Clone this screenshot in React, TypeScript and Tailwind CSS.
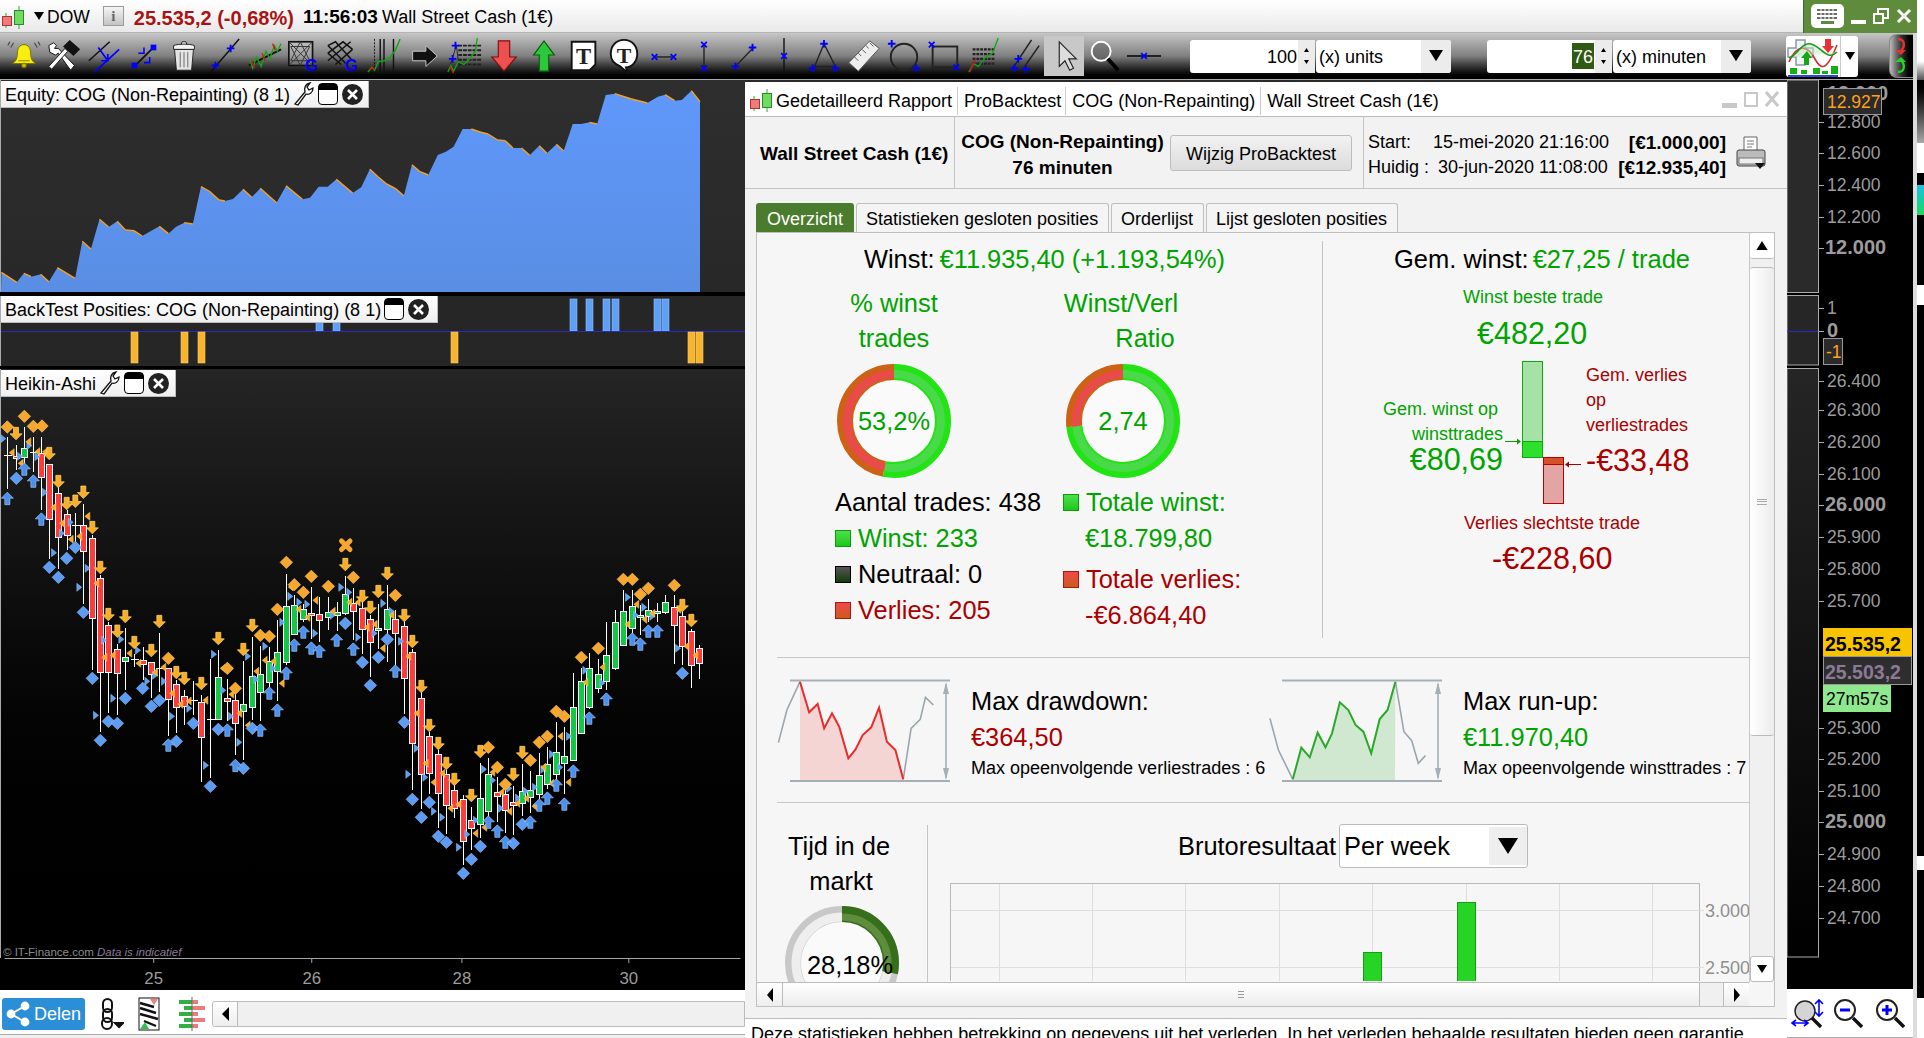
import type { ReactNode } from "react";

type Candle = [number, number, number, number, number, number];

// x, wick top, wick bottom, body top, body bottom, kind (0 red, 1 green, 2 doji). Values are 3x crop coords.
const left: Candle[] = [
  [22,105,262,162,167,2],[48,128,205,165,172,0],[73,75,190,140,168,1],[100,105,210,153,156,2],[124,105,325,155,228,0],
  [148,190,470,190,355,0],[175,245,500,275,408,0],[200,325,445,340,402,0],[226,333,420,372,375,2],[250,305,605,373,450,0],
  [277,400,803,412,652,0],[301,520,990,532,813,0],[325,660,932,673,813,0],[352,725,938,745,817,0],[376,678,863,769,781,1],
  [403,755,795,775,778,2],[428,735,833,778,790,0],[454,780,888,784,820,0],[478,693,870,800,803,2],[505,800,1002,802,895,0],
  [529,835,992,848,918,0],[553,865,968,884,915,0],[580,838,938,898,901,2],[604,880,1140,902,1009,0],[631,770,1128,954,957,2],
  [655,745,955,829,955,1],[682,830,957,892,901,0],[706,870,1060,898,967,0],[730,778,1073,908,930,1],[757,705,955,826,918,1],
  [781,732,957,818,874,1],[808,735,860,779,844,1],[832,655,897,754,811,1],[859,515,790,614,784,1],[883,580,700,613,700,1],
  [910,605,660,623,655,1],[934,555,710,637,642,0],[958,585,720,640,658,0],[985,585,683,634,649,1],[1010,600,686,634,642,1],
  [1036,522,638,578,636,1],[1060,558,713,607,631,0],[1087,600,755,620,685,0],[1111,640,825,653,724,0],[1135,605,740,681,688,1],
  [1162,550,780,623,685,1],[1186,625,790,653,696,0],
];
const right: Candle[] = [
  [13,330,635,376,532,0],[37,440,865,454,727,0],[64,570,920,590,820,0],[88,690,875,706,817,0],[115,745,978,760,877,0],
  [139,805,995,820,913,0],[163,850,947,868,922,0],[190,880,1088,895,1021,0],[214,915,1045,958,982,0],[241,783,1008,892,970,1],
  [265,768,950,818,931,1],[292,825,960,874,886,0],[316,860,992,880,928,0],[340,852,998,904,913,0],[367,786,942,871,907,1],
  [391,807,933,868,889,1],[418,752,890,823,880,1],[442,735,860,790,850,1],[469,660,860,754,820,1],[493,675,877,766,787,1],
  [520,513,778,619,778,1],[544,498,697,541,697,1],[568,453,620,502,619,1],[595,472,572,520,562,1],[619,360,563,463,541,1],
  [646,323,503,364,502,1],[670,263,433,331,433,1],[697,263,415,316,382,1],[721,308,398,343,349,1],[745,291,360,328,346,1],
  [772,303,360,331,337,1],[796,278,335,304,334,1],[823,280,485,319,373,0],[847,320,488,346,436,0],[874,380,557,391,493,0],
  [898,430,530,442,487,0],
];

type P = [number, number];
const toA = (l: P[]): P[] => l.map(([x, y]) => [x / 3, 400 + y / 3]);
const toB = (l: P[]): P[] => l.map(([x, y]) => [400 + x / 3, 500 + y / 3]);

const orangeDiamonds = [
  ...toA([[22,78],[73,46],[100,76],[126,75],[505,772],[682,802],[706,862],[781,703],[808,706],[832,625],[859,484],[883,551],[910,574],[934,526],[985,556],[1060,529],[1186,583]]),
  ...toB([[265,739],[292,799],[316,850],[391,778],[418,724],[442,706],[469,631],[493,646],[544,469],[595,442],[670,235],[697,235],[721,280],[745,262],[823,253]]),
];
const orangeDown = [
  ...toA([[48,97],[148,157],[175,241],[200,307],[226,300],[250,273],[277,379],[301,499],[325,640],[352,690],[376,646],[403,724],[454,748],[478,661],[529,814],[553,832],[604,847],[655,712],[730,745],[757,673],[1036,490],[1087,586],[1111,619],[1135,571],[1162,517]]),
  ...toB([[13,343],[37,421],[64,556],[88,673],[115,727],[139,787],[163,835],[214,883],[241,751],[340,820],[367,754],[847,313],[874,358]]),
];
const orangeLeft = [
  ...toA([[35,155],[62,187],[85,122],[112,152],[135,152],[160,319],[186,367],[212,415],[238,406],[262,346],[289,547],[313,769],[338,763],[388,757],[415,787],[465,814],[490,799],[516,877],[541,910],[566,900],[616,898],[668,802],[694,880],[718,937],[743,973],[769,811],[794,778],[820,781],[845,847],[872,558],[895,625],[922,649],[946,598],[998,631],[1048,604],[1073,604],[1100,679],[1124,670],[1148,742],[1175,643]]),
  ...toB([[50,637],[25,466],[77,787],[100,844],[127,817],[151,922],[175,910],[226,997],[253,979],[277,814],[304,874],[328,931],[352,907],[379,892],[403,916],[430,799],[454,847],[481,706],[505,844],[556,544],[607,499],[682,370],[709,310],[733,355],[757,337],[835,325],[859,436],[886,463]]),
];
const blueDiamonds = [
  ...toA([[49,232],[148,499],[175,529],[200,472],[226,439],[250,634],[277,832],[301,1018],[325,961],[352,967],[376,892],[428,862],[454,916],[478,898],[529,1021],[580,967],[631,1156],[655,985],[730,1102],[757,982],[1036,667],[1087,784],[1111,853],[1135,769],[1162,715]]),
  ...toB([[13,664],[37,895],[64,949],[88,904],[115,1006],[139,1024],[190,1117],[214,1075],[241,1036],[340,1027],[367,970],[847,517]]),
];
const blueUp = [
  ...toA([[22,293],[73,205],[100,241],[124,355],[505,1033],[682,988],[706,1094],[781,988],[808,877],[832,928],[859,817],[883,733],[910,694],[934,742],[958,751],[1010,718],[1060,745],[1186,811]]),
  ...toB([[265,964],[292,991],[316,1024],[391,964],[418,913],[442,892],[469,853],[493,910],[520,811],[568,652],[619,595],[697,415],[721,430],[745,391],[772,391]]),
];
const blueRight = [
  ...toA([[10,113],[60,166],[88,134],[112,167],[135,274],[162,455],[186,397],[212,364],[238,559],[263,502],[312,718],[364,715],[340,892],[288,943],[414,748],[442,841],[465,823],[492,841],[516,946],[568,922],[642,760],[618,1093],[670,868],[693,946],[718,1024],[744,766],[796,736],[769,835],[820,802],[847,664],[871,586],[898,604],[922,610],[946,697],[998,643],[1024,559],[1048,574],[1075,709],[1124,697],[1150,607],[1175,631]]),
  ...toB([[3,421],[50,742],[25,820],[76,829],[102,931],[127,949],[177,1039],[202,1000],[228,958],[252,805],[279,838],[303,922],[328,862],[354,891],[378,871],[405,859],[430,805],[456,760],[481,799],[507,706],[556,508],[607,546],[684,289],[708,343],[733,319],[757,346],[834,442]]),
];

const equity: P[] = [[3,577],[35,607],[50,580],[65,590],[85,583],[102,605],[120,563],[157,595],[172,484],[190,507],[208,418],[227,441],[245,424],[262,450],[280,452],[297,468],[333,439],[352,461],[368,440],[385,428],[403,432],[420,320],[437,333],[458,360],[470,363],[487,357],[508,328],[526,352],[544,325],[578,368],[598,317],[632,358],[648,353],[666,320],[685,320],[703,298],[737,339],[755,322],[773,268],[790,290],[808,312],[826,325],[844,347],[861,254],[878,275],[895,285],[915,225],[932,215],[948,200],[967,147],[985,147],[1003,156],[1020,162],[1040,180],[1056,182],[1072,204],[1090,204],[1107,226],[1127,197],[1143,220],[1163,193],[1178,213],[1197,132],[1215,132],[1232,127],[1248,132],[1266,45],[1285,41],[1320,57],[1353,69],[1375,50],[1390,44],[1410,62],[1425,60],[1445,32],[1463,65]];

const mini = (l: P[]) => l.map(([x, y]) => `${750 + x / 1.53},${650 + y / 3}`).join(" ");

const GREEN = "text-[#00a300]";
const RED = "text-[#aa0000]";
const BLUE = "#0000ff";

function CandleIcon() {
  return (
    <svg width="26" height="26" viewBox="0 0 26 26">
      <path d="M5 10v15M18 3v24" stroke="#3a3" strokeWidth="1" />
      <rect x="1.5" y="13.5" width="9" height="9" fill="#ef7b7b" stroke="#a33" />
      <rect x="13.5" y="7.5" width="9" height="14" fill="#6fdc5f" stroke="#2a8a2a" />
    </svg>
  );
}

function Plus({ x, y }: { x: number; y: number }) {
  return <path d={`M${x - 4} ${y}h8M${x} ${y - 4}v8`} stroke={BLUE} strokeWidth="2" fill="none" />;
}
function Cross({ x, y }: { x: number; y: number }) {
  return <path d={`M${x - 3} ${y - 3}l6 6M${x + 3} ${y - 3}l-6 6`} stroke={BLUE} strokeWidth="1.8" fill="none" />;
}

const toolbarIcons: ReactNode[] = [
  <g key="bell">
    <path d="M18 7c5 0 7 4 7 10 0 5 2 8 5 10H6c3-2 5-5 5-10 0-6 2-10 7-10z" fill="#f8ee10" stroke="#7a7000" />
    <path d="M12 24h12" stroke="#8a8000" />
    <circle cx="18" cy="29" r="2.5" fill="#c8b800" stroke="#7a7000" />
    <path d="M4 10l3-5M1 8l2-4M32 10l-3-5M35 8l-2-4" stroke="#444" strokeWidth="1.2" />
  </g>,
  <g key="tools">
    <path d="M2 8l5-3 3 3-2 3 4 0 17 18-4 5L12 16l-3 2-6-3z" fill="#fff" stroke="#111" />
    <path d="M5 33l-3-3 17-19 3 3z" fill="#fff" stroke="#111" />
    <path d="M17 9l7-7 11 10-7 7z" fill="#111" />
  </g>,
  <g key="par" fill="none">
    <path d="M2 24L24 4" stroke="#111" strokeWidth="1.6" />
    <path d="M8 36L34 12" stroke={BLUE} strokeWidth="1.8" />
    <path d="M12 10l10 14m0-7v7h-7" stroke={BLUE} strokeWidth="1.8" />
  </g>,
  <g key="dot">
    <path d="M9 29L27 11" stroke="#111" strokeWidth="1.8" />
    <path d="M12 16h6v-6M18 26h6v-6" stroke={BLUE} strokeWidth="1.6" fill="none" />
    <rect x="5" y="26" width="6" height="6" fill={BLUE} />
    <rect x="25" y="7" width="6" height="6" fill={BLUE} />
  </g>,
  <g key="trash">
    <path d="M8 12h20l-2 22H10z" fill="#e4e4e4" stroke="#222" />
    <path d="M7 8c5-2 17-2 22 0v4H7zM15 7l1-3h4l1 3" fill="#f4f4f4" stroke="#222" />
    <path d="M14 15v16M18 15v16M22 15v16" stroke="#666" />
  </g>,
  <g key="line">
    <path d="M4 36L34 1" stroke="#111" strokeWidth="1.6" />
    <Plus x={9} y={29} /><Plus x={25} y={11} />
  </g>,
  <g key="zig" fill="none">
    <path d="M2 29L36 12" stroke="#111" strokeWidth="2" />
    <path d="M3 22l3 10 4-12 5 10 5-16 4 8 5-14 3 6 4-8" stroke="#10a810" strokeWidth="1.4" />
    <path d="M5 24l3 8M16 16l3 8M27 6l3 7" stroke="#e01010" strokeWidth="1.4" />
  </g>,
  <g key="gann" fill="none">
    <rect x="2" y="4" width="25" height="25" stroke="#111" strokeWidth="1.8" fill="#fff" fillOpacity="0.25" />
    <path d="M2 4l25 25M27 4L2 29M14 4L4 24h20zM14 29L4 9h20z" stroke="#333" />
    <text x="19" y="35" fontSize="17" fontWeight="700" fill={BLUE}>G</text>
  </g>,
  <g key="grid" fill="none">
    <path d="M1 8l8-4 18 20M1 16l16-12 10 8M1 24l24-20M1 8l20 20M1 16l14 12M9 28L27 12" stroke="#111" strokeWidth="1.6" />
    <text x="19" y="35" fontSize="17" fontWeight="700" fill={BLUE}>G</text>
  </g>,
  <g key="vlines" fill="none">
    <path d="M8 1v36" stroke="#111" strokeDasharray="2 1.5" />
    <path d="M14 1v36M18 1v36M28 1v36" stroke="#111" strokeWidth="1.5" />
    <path d="M1 36l4-5 3 3 4-9 6-1 6-3 6-8 5-12" stroke="#10a810" strokeWidth="1.5" />
    <path d="M3 33l3-2 2 3" stroke="#e01010" strokeWidth="1.5" />
  </g>,
  <g key="arrow">
    <path d="M6 14h14V8l12 11-12 11v-6H6z" fill="#111" stroke="#ccc" />
  </g>,
  <g key="fib" fill="none">
    <path d="M12 8h24M12 13h24M12 18h24M12 23h24M12 28h24" stroke="#222" strokeWidth="2" strokeDasharray="4 1" />
    <path d="M2 33L10 8l3 24" stroke="#222" />
    <path d="M1 36l3-7 3 6 5-10 6 3 6-6 6-8 2-14" stroke="#10a810" strokeWidth="1.4" />
    <path d="M3 30l4 7" stroke="#e01010" strokeWidth="1.4" />
    <Plus x={9} y={8} /><Plus x={6} y={22} />
  </g>,
  <path key="down" d="M12 3h12v17h7L18 35 5 20h7z" fill="#ee5050" stroke="#7a1010" strokeWidth="1.2" />,
  <path key="up" d="M13 35h10V18h6L18 3 7 18h6z" fill="#2ac83a" stroke="#0a5a0a" strokeWidth="1.2" />,
  <g key="tbox">
    <path d="M5 4h25v24l-6 6H5z" fill="#fff" stroke="#111" strokeWidth="2" />
    <text x="17.5" y="27" fontSize="24" fontWeight="700" fontFamily="Liberation Serif" textAnchor="middle" fill="#222">T</text>
  </g>,
  <g key="tbub">
    <path d="M18 2c9 0 14 7 14 15s-6 14-12 14l2 6-8-7C9 28 4 24 4 17 4 9 9 2 18 2z" fill="#fff" stroke="#111" strokeWidth="2" />
    <text x="18" y="26" fontSize="23" fontWeight="700" fontFamily="Liberation Serif" textAnchor="middle" fill="#222">T</text>
  </g>,
  <g key="hh"><path d="M9 20h18" stroke="#222" strokeWidth="1.5" /><Cross x={8} y={20} /><Cross x={28} y={20} /></g>,
  <g key="vv"><path d="M18 8v24" stroke="#222" strokeWidth="1.5" /><Cross x={18} y={7} /><Cross x={18} y={32} /></g>,
  <g key="dg"><path d="M8 31L28 10" stroke="#222" strokeWidth="1.5" /><Plus x={27} y={10} /><Plus x={9} y={30} /></g>,
  <g key="vl"><path d="M18 0v37" stroke="#111" strokeWidth="1.5" /><Cross x={18} y={19} /></g>,
  <g key="tri" fill="none"><path d="M18 6L8 30h22z" stroke="#222" strokeWidth="1.5" /><Plus x={18} y={6} /><Plus x={6} y={32} /><Plus x={30} y={32} /></g>,
  <g key="ruler"><path d="M2 26L24 3l10 8-22 24z" fill="#eee" stroke="#555" /><path d="M8 20l4 4M12 16l3 3M16 12l4 4M20 8l3 3M24 5l4 4" stroke="#555" /></g>,
  <g key="circ" fill="none"><circle cx="18" cy="20" r="14" stroke="#222" strokeWidth="2" /><Plus x={5} y={6} /><Plus x={31} y={32} /></g>,
  <g key="rect" fill="none"><rect x="6" y="9" width="26" height="22" stroke="#222" strokeWidth="2" /><Cross x={5} y={7} /><Cross x={31} y={31} /></g>,
  <g key="fib2" fill="none">
    <path d="M6 12h24M6 17h24M6 22h24M6 27h24" stroke="#222" strokeWidth="2.4" strokeDasharray="3 1" />
    <path d="M2 36l5-9 5 3 8-10 7-4 6-16" stroke="#10a810" strokeWidth="1.4" />
    <path d="M3 36l6-14" stroke="#e01010" strokeWidth="1.4" />
  </g>,
  <g key="par2" fill="none">
    <path d="M6 32L26 2M16 34L34 8" stroke="#222" strokeWidth="1.6" />
    <Plus x={12} y={22} /><Plus x={8} y={32} /><Plus x={20} y={33} />
  </g>,
  <g key="cursor">
    <path d="M13 4v26l6-6 5 10 4-2-5-10h8z" fill="#ddd" stroke="#222" strokeWidth="1.2" />
  </g>,
  <g key="mag">
    <circle cx="15" cy="14" r="10" fill="#555" fillOpacity="0.5" stroke="#fff" strokeWidth="2" />
    <path d="M22 22l11 12" stroke="#000" strokeWidth="4" />
  </g>,
  <g key="hl"><path d="M0 19h36" stroke="#222" strokeWidth="2" /><Cross x={18} y={19} /></g>,
];

function Triangle({ up = false, size = 5, color = "#000" }: { up?: boolean; size?: number; color?: string }) {
  return (
    <svg width={size * 2} height={size * 1.6} viewBox="0 0 10 8">
      <path d={up ? "M0 8h10L5 0z" : "M0 0h10L5 8z"} fill={color} />
    </svg>
  );
}

function TitleBar() {
  return (
    <div className="h-[33px] flex items-center bg-gradient-to-b from-white to-[#e9e9e9] border-b border-[#b4b4b4] text-[18px] text-black">
      <div className="w-[30px] pl-[1px]"><CandleIcon /></div>
      <div className="w-[17px] flex justify-center"><Triangle /></div>
      <span className="pt-[3px] text-[17.5px]">DOW</span>
      <div className="ml-[13px] w-[21px] h-[20px] bg-gradient-to-b from-[#f5f5f5] to-[#c4c4c4] border border-[#9a9a9a] flex items-center justify-center font-['Liberation_Serif',serif] font-bold text-[#666] text-[15px]">i</div>
      <span className="ml-[10px] pt-[3px] font-bold text-[#a81414] text-[20px]">25.535,2 (-0,68%)</span>
      <span className="ml-[9px] pt-[3px] font-bold text-[19px]">11:56:03</span>
      <span className="ml-[4px] pt-[3px]">Wall Street Cash (1€)</span>
      <div className="ml-auto w-[114px] h-[33px] bg-[#5e8c3c] border-l border-[#3f6a26] flex items-center pl-[7px]">
        <svg width="33" height="24" viewBox="0 0 33 24">
          <rect width="33" height="24" rx="5" fill="#fff" />
          <path d="M6 5h20v2H6zM6 9h20v2H6zM6 13h20v2H6z" fill="#6a6a6a" />
          <path d="M10 5v10M14 5v10M18 5v10M22 5v10" stroke="#fff" />
          <rect x="10" y="17" width="13" height="3" fill="#5e8c3c" />
        </svg>
        <div className="ml-[7px] mt-[12px] w-[15px] h-[4px] bg-white" />
        <svg className="ml-[7px]" width="16" height="16" viewBox="0 0 16 16" fill="none" stroke="#fff" strokeWidth="2">
          <rect x="1" y="6" width="9" height="9" />
          <path d="M5 5V1h10v9h-4" />
        </svg>
        <svg className="ml-[7px]" width="16" height="16" viewBox="0 0 16 16" stroke="#fff" strokeWidth="3">
          <path d="M2 2l12 12M14 2L2 14" />
        </svg>
      </div>
      <div className="w-[7px] h-[33px] bg-white" />
    </div>
  );
}

function SpinInput({ value, selected = false }: { value: string; selected?: boolean }) {
  return (
    <div className="w-[125px] h-[33px] bg-white rounded-[3px] flex items-center justify-end text-[18px] text-black">
      {selected ? <span className="bg-[#2e5a12] text-white px-[1px] h-[26px] leading-[28px]">{value}</span> : <span className="pt-[2px]">{value}</span>}
      <div className="ml-[1px] w-[17px] h-[33px] bg-[#ececec] flex flex-col items-center justify-center gap-[8px]">
        <Triangle up size={2.5} />
        <Triangle size={2.5} />
      </div>
    </div>
  );
}

function UnitSelect({ label, width }: { label: string; width: string }) {
  return (
    <div className={`${width} ml-[1px] h-[33px] bg-white rounded-[3px] flex items-center text-[18px] text-black pl-[3px]`}>
      <span className="pt-[2px]">{label}</span>
      <div className="ml-auto w-[30px] h-[33px] bg-[#ececec] flex items-center justify-center rounded-r-[3px]">
        <Triangle size={7} />
      </div>
    </div>
  );
}

function Toolbar() {
  return (
    <div className="h-[47px] flex items-center bg-gradient-to-b from-[#c6c6c6] via-[#808080] to-black border-b border-[#aaa]">
      <div className="pl-[4px] flex">
        {toolbarIcons.map((icon, i) => (
          <div key={i} className={`w-[40px] h-[40px] flex items-center justify-center ${i === 26 ? "bg-[#c8c8c8]" : ""}`}>
            <svg width="36" height="36" viewBox="0 0 36 38" className="overflow-visible">{icon}</svg>
          </div>
        ))}
      </div>
      <div className="ml-[26px] flex"><SpinInput value="100" /><UnitSelect label="(x) units" width="w-[135px]" /></div>
      <div className="ml-[36px] flex"><SpinInput value="76" selected /><UnitSelect label="(x) minuten" width="w-[138px]" /></div>
      <div className="ml-[35px] w-[72px] h-[41px] bg-white rounded-[3px] flex items-center">
        <svg width="54" height="41" viewBox="0 0 54 41">
          <path d="M10 4h9v8h8v9h-8v8h-9v-8H2v-9h8z" fill="#f0f4f8" stroke="#8a9aa8" strokeWidth="1.5" />
          <path d="M3 26c8-18 18-18 26-3s14 6 22-14" stroke="#d03030" strokeWidth="1.6" fill="none" />
          <path d="M3 22c8-2 12-16 22-14s16 18 26 8" stroke="#1a9a1a" strokeWidth="1.6" fill="#bfeabf" fillOpacity="0.5" />
          <path d="M39 3h6v7h3l-6 7-6-7h3z" fill="#e83030" />
          <path d="M18 29h5v-7h3l-5-7-6 7h3z" fill="#14a814" />
          <path d="M4 32h7v6H4zM27 32h7v6h-7zM45 30h7v8h-7zM15 34h6v4h-6zM36 35h6v3h-6z" fill="#14b014" />
          <path d="M2 40h50" stroke="#2a4ad8" strokeWidth="2" />
        </svg>
        <div className="h-[41px] w-[18px] border-l border-[#ccc] flex items-center justify-center"><Triangle size={5} /></div>
      </div>
      <div className="ml-[31px] w-[25px] h-[44px] bg-gradient-to-r from-[#bbb] via-[#333] to-black rounded-l-[8px] border border-[#888] border-r-0 flex items-center justify-center">
        <svg width="18" height="40" viewBox="0 0 18 40" fill="none">
          <path d="M5 3c6 0 8 6 3 12" stroke="#e83030" strokeWidth="2.4" />
          <path d="M2 14h11l-5 5z" fill="#e83030" />
          <path d="M5 36c6 0 8-6 3-12" stroke="#22d822" strokeWidth="2.4" />
          <path d="M2 26h11l-5-5z" fill="#22d822" />
        </svg>
      </div>
      <div className="w-[4px] h-[47px] bg-[#d8d8d8]" />
      <div className="w-[7px] h-[47px] bg-gradient-to-b from-white from-60% to-[#555]" />
    </div>
  );
}

function ChartLabel({ text, width, wrench = false }: { text: string; width: string; wrench?: boolean }) {
  return (
    <div className={`${width} h-[27px] flex items-center pl-[4px] bg-gradient-to-b from-white to-[#efefef] border-b border-r border-[#bbb] text-[18px] text-black shrink-0`}>
      <span className="pt-[2px] whitespace-nowrap">{text}</span>
      {wrench && (
        <svg className="ml-[3px]" width="22" height="24" viewBox="0 0 22 24" fill="#fff" stroke="#111" strokeWidth="1.3">
          <path d="M2 22l10-12c-1-4 0-8 5-9l-3 4 2 3 4-2c0 5-4 7-7 6L5 23z" />
        </svg>
      )}
      <div className="ml-[3px] w-[20px] h-[22px] rounded-[4px] border border-black bg-gradient-to-b from-black from-30% to-white to-30%" />
      <div className="ml-[4px] w-[21px] h-[21px] rounded-full bg-[#222] flex items-center justify-center">
        <svg width="11" height="11" viewBox="0 0 11 11" stroke="#fff" strokeWidth="2.6"><path d="M1 1l9 9M10 1l-9 9" /></svg>
      </div>
    </div>
  );
}

function EquityPanel() {
  const pts = equity.map(([x, y]) => [x / 2.09, y / 3]);
  const fill = `${pts.map(([x, y]) => `${x},${y}`).join(" ")} ${pts[pts.length - 1][0]},212 1,212`;
  return (
    <div className="h-[212px] relative bg-gradient-to-b from-[#2e2e2e] to-[#282828] border-l border-[#aaa]">
      <svg className="block" width="744" height="212" viewBox="1 0 744 212">
        <defs>
          <linearGradient id="eq" x1="0" x2="0" y1="0" y2="1">
            <stop offset="0" stopColor="#5f98fb" />
            <stop offset="1" stopColor="#5a8ee4" />
          </linearGradient>
        </defs>
        <polygon points={fill} fill="url(#eq)" />
        {pts.slice(1).map(([x, y], i) =>
          y > pts[i][1] ? (
            <line key={i} x1={pts[i][0]} y1={pts[i][1]} x2={x} y2={y} stroke="#f5a024" strokeWidth="1.4" />
          ) : null
        )}
      </svg>
      <div className="absolute left-0 top-[1px]">
        <ChartLabel text="Equity: COG (Non-Repainting) (8 1)" width="w-[368px]" wrench />
      </div>
    </div>
  );
}

function BackTestPanel() {
  const up = [316, 333, 570, 586, 603, 612, 654, 662];
  const down = [131, 181, 198, 451, 688, 696];
  return (
    <div className="h-[70px] mt-[4px] relative bg-[#262626] border-l border-[#aaa]">
      <svg className="block" width="744" height="70" viewBox="1 296 744 70">
        {up.map((x) => (
          <rect key={x} x={x} y="299" width="7" height="32" fill="#5da0f5" stroke="#8fc0fa" strokeWidth="0.6" />
        ))}
        <line x1="0" x2="745" y1="331.5" y2="331.5" stroke="#2a2ac8" />
        {down.map((x) => (
          <rect key={x} x={x} y="332" width="7" height="31" fill="#f8b42c" stroke="#fdd070" strokeWidth="0.6" />
        ))}
      </svg>
      <div className="absolute left-0 top-0">
        <ChartLabel text="BackTest Posities: COG (Non-Repainting) (8 1)" width="w-[437px]" />
      </div>
    </div>
  );
}

function diamond([x, y]: P, r = 6.2) {
  return `M${x} ${y - r}L${x + r} ${y}L${x} ${y + r}L${x - r} ${y}Z`;
}
function arrow([x, y]: P, d: 1 | -1) {
  return `M${x - 2.5} ${y - 6 * d}h5v${6.5 * d}h3.5L${x} ${y + 6.5 * d}L${x - 6} ${y + 0.5 * d}h3.5z`;
}
function tri([x, y]: P, dir: 1 | -1) {
  return `M${x - 2.5 * dir} ${y - 4}L${x + 2.5 * dir} ${y}L${x - 2.5 * dir} ${y + 4}Z`;
}

function CandleMark({ c, off, base }: { c: Candle; off: number; base: number }) {
  const [x0, wt, wb, bt, bb, kind] = c;
  const x = Math.round(off + x0 / 3) + 0.5;
  const y = (v: number) => Math.round(base + v / 3) + 0.5;
  return (
    <g shapeRendering="crispEdges">
      <line x1={x} x2={x} y1={y(wt)} y2={y(wb)} stroke="#fff" />
      {kind === 2 ? (
        <line x1={x - 4} x2={x + 4} y1={y(bt)} y2={y(bt)} stroke="#fff" strokeWidth="1.4" />
      ) : (
        <rect x={x - 3} y={y(bt)} width="6" height={Math.max(y(bb) - y(bt), 2)} fill={kind === 0 ? "#ff3c3c" : "#12c844"} stroke="#fff" />
      )}
    </g>
  );
}

function HeikinPanel() {
  return (
    <div className="h-[589px] mt-[3px] relative bg-gradient-to-b from-[#252525] to-black border-l border-[#aaa]">
      <svg className="block" width="744" height="589" viewBox="1 368 744 589">
        {left.map((c, i) => <CandleMark key={i} c={c} off={0} base={400} />)}
        {right.map((c, i) => <CandleMark key={i} c={c} off={400} base={500} />)}
        {blueRight.map((p, i) => <path key={i} d={tri(p, 1)} fill="#5aa0f5" stroke="#9cc6f8" strokeWidth="0.5" />)}
        {orangeLeft.map((p, i) => <path key={i} d={tri(p, -1)} fill="#f8aa28" stroke="#ffd070" strokeWidth="0.5" />)}
        {orangeDiamonds.map((p, i) => <path key={i} d={diamond(p)} fill="#f7a62e" stroke="#ffc860" strokeWidth="0.7" />)}
        {blueDiamonds.map((p, i) => <path key={i} d={diamond(p)} fill="#5c9cf5" stroke="#8dbdf9" strokeWidth="0.7" />)}
        {orangeDown.map((p, i) => <path key={i} d={arrow(p, 1)} fill="#f9ae26" stroke="#ffd878" strokeWidth="0.7" />)}
        {blueUp.map((p, i) => <path key={i} d={arrow(p, -1)} fill="#4c90ee" stroke="#9cc6f8" strokeWidth="0.7" />)}
        <path d="M341.5 540L350 548.5M350 540L341.5 548.5" stroke="#f7a62e" strokeWidth="5" strokeLinecap="round" />
        <text x="3" y="955" fontSize="11.5" fill="#8a8a8a">© IT-Finance.com</text>
        <text x="97" y="955" fontSize="11.5" fontStyle="italic" fill="#8a7a96">Data is indicatief</text>
      </svg>
      <div className="absolute left-0 top-[1px]">
        <ChartLabel text="Heikin-Ashi" width="w-[175px]" wrench />
      </div>
    </div>
  );
}

function TimeAxis() {
  const ticks: [number, string][] = [[151, "25"], [311, "26"], [463, "28"], [632, "30"]];
  return (
    <svg className="block bg-black" width="745" height="32" viewBox="0 957 745 32">
      <line x1="0" x2="745" y1="957.5" y2="957.5" stroke="#aaa" />
      {ticks.map(([x, t]) => (
        <g key={t}>
          <line x1={x} x2={x} y1="958" y2="962" stroke="#aaa" />
          <text x={x} y="983" fontSize="17" fill="#9c9c9c" textAnchor="middle">{t}</text>
        </g>
      ))}
    </svg>
  );
}

function BottomBar() {
  return (
    <div className="h-[49px] bg-[#f0f0f0] flex flex-col">
      <div className="h-[45px] bg-white flex items-center pl-[2px] pt-[4px] border-b border-[#aaa]">
        <div className="w-[83px] h-[32px] bg-[#2b8fd8] rounded-[3px] flex items-center pl-[4px] gap-[4px] text-white text-[18px]">
          <svg width="24" height="26" viewBox="0 0 24 26" fill="#fff" stroke="#fff" strokeWidth="2">
            <path d="M19 5L5 13l14 8" fill="none" />
            <circle cx="19" cy="5" r="3.4" /><circle cx="5" cy="13" r="3.4" /><circle cx="19" cy="21" r="3.4" />
          </svg>
          <span className="pt-[2px]">Delen</span>
        </div>
        <svg className="ml-[13px]" width="26" height="32" viewBox="0 0 26 32" fill="none" stroke="#111" strokeWidth="2">
          <rect x="5" y="1" width="9" height="13" rx="4.5" />
          <rect x="5" y="11" width="9" height="13" rx="4.5" />
          <rect x="4" y="20" width="10" height="11" rx="5" />
          <path d="M17 25h8l-4 4z" fill="#111" />
        </svg>
        <svg className="ml-[14px]" width="22" height="34" viewBox="0 0 22 34">
          <rect x="1" y="1" width="20" height="32" fill="#fff" stroke="#111" />
          <path d="M2 6l14 4M2 11l16 5M2 17l18 5M6 24l12 5" stroke="#111" strokeWidth="2.4" />
          <path d="M12 2h8l-4 6z" fill="#ee8080" />
          <path d="M2 32h9l-4-7z" fill="#30c050" />
        </svg>
        <svg className="ml-[18px]" width="27" height="34" viewBox="0 0 27 34">
          <path d="M1 3h13v4H1zM1 15h13v4H1zM1 27h13v4H1zM6 9h8v4H6zM6 21h8v4H6z" fill="#30b040" />
          <path d="M14 3h6v4h-6zM14 9h13v4H14zM14 15h6v4h-6zM14 21h13v4H14zM14 27h6v4h-6z" fill="#ee7a7a" />
          <path d="M14 0v34" stroke="#666" />
        </svg>
        <div className="ml-[7px] flex-1 h-[26px] bg-[#f0f0f0] border border-[#bbb] rounded-l-[3px] flex">
          <div className="w-[25px] bg-gradient-to-b from-white to-[#eee] border-r border-[#bbb] rounded-l-[3px] flex items-center justify-center">
            <svg width="7" height="14" viewBox="0 0 7 14"><path d="M7 0v14L0 7z" fill="#000" /></svg>
          </div>
        </div>
      </div>
    </div>
  );
}

function Ring({ pct, label, red = "#e94a4a" }: { pct: number; label: string; red?: string }) {
  const rest = 100 - pct;
  return (
    <svg className="overflow-visible" width="114" height="114" viewBox="0 0 114 114">
      <circle cx="57" cy="57" r="42" fill="#fafafa" />
      <g fill="none" transform="rotate(-90 57 57)">
        <circle cx="57" cy="57" r="49" strokeWidth="16" pathLength="100" stroke="#22e414" strokeDasharray={`${pct} 100`} />
        <circle cx="57" cy="57" r="47" strokeWidth="8" pathLength="100" stroke="#49da49" strokeDasharray={`${pct} 100`} />
        <circle cx="57" cy="57" r="49" strokeWidth="16" pathLength="100" stroke="#ce6214" strokeDasharray={`${rest} 100`} strokeDashoffset={-pct} />
        <circle cx="57" cy="57" r="47" strokeWidth="8" pathLength="100" stroke={red} strokeDasharray={`${rest} 100`} strokeDashoffset={-pct} />
      </g>
      <text x="57" y="66" textAnchor="middle" fontSize="25.4" fill="#00a300">{label}</text>
    </svg>
  );
}

function Swatch({ kind }: { kind: "g" | "r" | "n" }) {
  const cls = {
    g: "from-[#4be04b] to-[#18c818] border-[#0e9a0e]",
    r: "from-[#f04848] to-[#cc5a14] border-[#a81818]",
    n: "from-[#555] to-[#143a06] border-black",
  }[kind];
  return <div className={`w-[16px] h-[17px] border bg-gradient-to-b ${cls} shrink-0`} />;
}

function Row({ color, children, swatch, pad = false }: { color?: string; children: ReactNode; swatch?: "g" | "r" | "n"; pad?: boolean }) {
  return (
    <div className={`h-[36px] flex items-center gap-[7px] whitespace-nowrap ${color ?? "text-black"} ${pad ? "pl-[22px]" : ""}`}>
      {swatch && <Swatch kind={swatch} />}
      <span>{children}</span>
    </div>
  );
}

function OverviewLeft() {
  return (
    <div className="w-[566px] h-[397px] mt-[8px] border-r border-[#c4c4c4] text-[25.4px] leading-[35px]">
      <div className="h-[36px] pl-[107px] flex items-center gap-[5px] whitespace-nowrap">
        <span className="text-black">Winst:</span>
        <span className={GREEN}>€11.935,40 (+1.193,54%)</span>
      </div>
      <div className={`mt-[9px] flex ${GREEN}`}>
        <div className="ml-[22px] w-[230px] flex flex-col items-center">
          <span>% winst</span>
          <span>trades</span>
          <div className="mt-[8px]"><Ring pct={53.2} label="53,2%" /></div>
        </div>
        <div className="w-[228px] flex flex-col items-center">
          <span className="-ml-[4px]">Winst/Verl</span>
          <span className="ml-[44px]">Ratio</span>
          <div className="mt-[8px]"><Ring pct={73.2} label="2,74" /></div>
        </div>
      </div>
      <div className="mt-[6px] pl-[78px] flex">
        <div className="w-[228px]">
          <Row>Aantal trades: 438</Row>
          <Row color={GREEN} swatch="g">Winst: 233</Row>
          <Row swatch="n">Neutraal: 0</Row>
          <Row color={RED} swatch="r">Verlies: 205</Row>
        </div>
        <div>
          <Row color={GREEN} swatch="g">Totale winst:</Row>
          <Row color={GREEN} pad>€18.799,80</Row>
          <div className="h-[5px]" />
          <Row color={RED} swatch="r">Totale verlies:</Row>
          <Row color={RED} pad>-€6.864,40</Row>
        </div>
      </div>
    </div>
  );
}

function OverviewRight() {
  return (
    <div className="flex-1 pt-[8px] text-[18px]">
      <div className="h-[36px] pl-[71px] flex items-center gap-[4px] text-[25.5px] whitespace-nowrap">
        <span className="text-black">Gem. winst:</span>
        <span className={GREEN}>€27,25 / trade</span>
      </div>
      <div className={`mt-[7px] h-[26px] pl-[140px] flex items-center leading-none ${GREEN}`}>Winst beste trade</div>
      <div className={`mt-[6px] h-[36px] pl-[154px] flex items-center text-[30.5px] ${GREEN}`}>€482,20</div>
      <div className="mt-[6px] flex h-[146px]">
        <div className={`w-[180px] flex flex-col items-end ${GREEN}`}>
          <div className="mt-[39px] leading-[24px] mr-[5px] whitespace-nowrap">Gem. winst op</div>
          <div className="leading-[26px]">winsttrades</div>
          <div className="text-[30.5px] leading-[36px] -mt-[6px]">€80,69</div>
        </div>
        <svg className="block shrink-0" width="82" height="146" viewBox="1504 357 82 146">
          <rect x="1523.5" y="360.5" width="20" height="96" fill="#a6e2a6" stroke="#10a810" />
          <rect x="1523.5" y="440.5" width="20" height="16" fill="#2ee02e" stroke="#10a810" />
          <rect x="1544.5" y="456.5" width="20" height="46" fill="#e3a4a4" stroke="#b80000" />
          <rect x="1544.5" y="456.5" width="20" height="7" fill="#d8502a" stroke="#b80000" />
          <path d="M1506 440.5h15" stroke="#0a9a0a" /><path d="M1522 440.5l-4-3v6z" fill="#0a9a0a" />
          <path d="M1582 463.5h-15" stroke="#a80000" /><path d="M1566 463.5l4-3v6z" fill="#a80000" />
        </svg>
        <div className={`flex flex-col pl-[1px] ${RED}`}>
          <div className="mt-[4px] leading-[26px] whitespace-nowrap">Gem. verlies</div>
          <div className="leading-[25px]">op</div>
          <div className="leading-[25px]">verliestrades</div>
          <div className="text-[30.5px] leading-[36px] mt-[4px]">-€33,48</div>
        </div>
      </div>
      <div className={`mt-[6px] h-[26px] pl-[141px] flex items-center leading-none ${RED}`}>Verlies slechtste trade</div>
      <div className={`mt-[5px] h-[36px] pl-[169px] flex items-center text-[30.5px] ${RED}`}>-€228,60</div>
    </div>
  );
}

function MiniChart({ box, width, before, main, after, fill, stroke, areaX, arrowX, lineX }: {
  box: string; width: number; before: string; main: string; after: string; fill: string; stroke: string; areaX: [number, number]; arrowX: number; lineX: number;
}) {
  const [x0, x1] = areaX;
  return (
    <svg className="block shrink-0" width={width} height="110" viewBox={box}>
      <polygon points={`${main} ${x1},781 ${x0},781`} fill={fill} />
      <polyline points={before} fill="none" stroke="#9aa6ac" strokeWidth="1.6" />
      <polyline points={after} fill="none" stroke="#9aa6ac" strokeWidth="1.6" />
      <polyline points={main} fill="none" stroke={stroke} strokeWidth="2" />
      <path d={`M${lineX} 680.5h160M${lineX} 781h160`} stroke="#a4b0b6" strokeWidth="2" />
      <path d={`M${arrowX} 684v94`} stroke="#a4b0b6" strokeWidth="1.6" />
      <path d={`M${arrowX} 682l-3 12h6zM${arrowX} 780l-3-12h6z`} fill="#a4b0b6" />
    </svg>
  );
}

function DrawdownRow() {
  return (
    <div className="h-[144px] flex pl-[17px]">
      <div className="pt-[17px]">
        <MiniChart
          box="775 675 190 110" width={190} lineX={791}
          before={mini([[45,278],[58,180],[78,95]])}
          main={mini([[78,95],[92,187],[105,162],[115,235],[127,190],[138,230],[152,325],[163,298],[174,255],[187,232],[199,173],[211,275],[224,300],[236,388]])}
          after={mini([[236,388],[248,235],[262,208],[270,142],[282,165]])}
          fill="#f5d4d4" stroke="#e82c2c" areaX={[801, 904]} arrowX={947}
        />
      </div>
      <div className="ml-[7px] w-[296px] pt-[25px]">
        <div className="text-[25.4px] leading-[36px] text-black">Max drawdown:</div>
        <div className={`text-[25.4px] leading-[36px] ${RED}`}>€364,50</div>
        <div className="text-[18px] leading-[26px] text-black whitespace-nowrap">Max opeenvolgende verliestrades : 6</div>
      </div>
      <div className="pt-[17px]">
        <MiniChart
          box="1268 675 192 110" width={192} lineX={1283}
          before={mini([[797,205],[810,300],[832,388]])}
          main={mini([[832,388],[845,293],[858,322],[870,248],[882,292],[892,250],[904,157],[917,180],[928,225],[940,245],[952,310],[965,207],[977,180],[989,95]])}
          after={mini([[989,95],[1002,245],[1014,272],[1024,340],[1035,317]])}
          fill="#cfe8cf" stroke="#2aa82a" areaX={[1294, 1396]} arrowX={1439}
        />
      </div>
      <div className="ml-[4px] pt-[25px]">
        <div className="text-[25.4px] leading-[36px] text-black">Max run-up:</div>
        <div className={`text-[25.4px] leading-[36px] ${GREEN}`}>€11.970,40</div>
        <div className="text-[18px] leading-[26px] text-black whitespace-nowrap">Max opeenvolgende winsttrades : 7</div>
      </div>
    </div>
  );
}

function MarketRow() {
  return (
    <div className="h-[179px] flex overflow-hidden">
      <div className="w-[171px] mt-[22px] border-r border-[#c4c4c4] flex flex-col items-center text-[25.4px] leading-[35px] text-black shrink-0">
        <span className="mt-[4px] -ml-[6px]">Tijd in de</span>
        <span className="-ml-[2px]">markt</span>
        <svg className="mt-[7px] overflow-visible shrink-0" width="114" height="114" viewBox="0 0 114 114">
          <circle cx="57" cy="57" r="42" fill="#fafafa" />
          <circle cx="57" cy="57" r="49" fill="none" strokeWidth="16" stroke="#c8c8c8" />
          <circle cx="57" cy="57" r="46" fill="none" strokeWidth="9" stroke="#eeeeee" />
          <g transform="rotate(-90 57 57)" fill="none">
            <circle cx="57" cy="57" r="49" strokeWidth="16" pathLength="100" stroke="#356f1c" strokeDasharray="28.18 100" />
            <circle cx="57" cy="57" r="46" strokeWidth="7" pathLength="100" stroke="#5e8d3e" strokeDasharray="28.18 100" />
          </g>
          <text x="65" y="68" textAnchor="middle" fontSize="25.4" fill="#000">28,18%</text>
        </svg>
      </div>
      <div className="flex-1 min-w-0 pt-[21px]">
        <div className="flex items-center h-[44px] pl-[250px] text-[25.4px] text-black">
          <span>Brutoresultaat</span>
          <div className="ml-[3px] w-[189px] h-[44px] bg-white border border-[#bbb] rounded-[3px] flex items-center pl-[4px]">
            <span>Per week</span>
            <div className="ml-auto w-[38px] h-[38px] bg-[#eee] flex items-center justify-center"><Triangle size={10} /></div>
          </div>
        </div>
        <svg className="block mt-[15px]" width="821" height="98" viewBox="929 883 821 98">
          <rect x="951.5" y="883.5" width="749" height="110" fill="none" stroke="#b8b8b8" />
          {[1000, 1093, 1186, 1280, 1373, 1467, 1560, 1653].map((x) => (
            <line key={x} x1={x + 0.5} x2={x + 0.5} y1="884" y2="981" stroke="#dedede" />
          ))}
          {[910, 967].map((y) => <line key={y} x1="952" x2="1705" y1={y + 0.5} y2={y + 0.5} stroke="#dedede" />)}
          <rect x="1364.5" y="952.5" width="18" height="40" fill="#26d426" stroke="#12a012" />
          <rect x="1458.5" y="902.5" width="18" height="90" fill="#26d426" stroke="#12a012" />
          <text x="1706" y="917" fontSize="18" fill="#8f8f8f">3.000</text>
          <text x="1706" y="974" fontSize="18" fill="#8f8f8f">2.500</text>
        </svg>
      </div>
    </div>
  );
}

function VScroll() {
  return (
    <div className="w-[25px] flex flex-col bg-[#f0f0f0] border-l border-[#c8c8c8]">
      <div className="h-[26px] bg-white border-b border-[#bbb] rounded-[3px] flex items-center justify-center"><Triangle up size={6} /></div>
      <div className="h-[8px]" />
      <div className="h-[469px] bg-gradient-to-r from-white to-[#ececec] border-y border-[#bbb] rounded-[3px] flex items-center justify-center">
        <div className="w-[10px] h-[6px] border-y border-[#aaa] flex items-center"><div className="w-full h-px bg-[#aaa]" /></div>
      </div>
      <div className="mt-auto h-[26px] bg-white border border-[#bbb] rounded-[3px] flex items-center justify-center"><Triangle size={5} /></div>
    </div>
  );
}

function HScroll() {
  return (
    <div className="h-[25px] w-[992px] flex bg-[#f0f0f0] border-t border-[#bbb]">
      <div className="w-[26px] bg-gradient-to-b from-white to-[#eee] border-r border-[#bbb] rounded-l-[3px] flex items-center justify-center">
        <svg width="6" height="14" viewBox="0 0 6 14"><path d="M6 0v14L0 7z" fill="#000" /></svg>
      </div>
      <div className="w-[917px] bg-gradient-to-b from-white to-[#ececec] border-r border-[#bbb] flex items-center justify-center">
        <div className="w-[6px] h-[7px] border-y border-[#999] flex items-center"><div className="w-full h-px bg-[#999]" /></div>
      </div>
      <div className="ml-auto w-[26px] bg-gradient-to-b from-white to-[#eee] border-l border-[#bbb] rounded-r-[3px] flex items-center justify-center">
        <svg width="6" height="14" viewBox="0 0 6 14"><path d="M0 0v14L6 7z" fill="#000" /></svg>
      </div>
    </div>
  );
}

function Report() {
  const tab = "h-[29px] px-[9px] pt-[3px] flex items-center bg-[#f4f4f4] border border-b-0 border-[#c0c0c0] rounded-t-[3px] text-black";
  return (
    <div className="h-[956px] bg-[#f2f2f2] text-[18px] text-black flex flex-col overflow-hidden">
      <div className="h-[35px] shrink-0 flex items-center pl-[4px] bg-white border-b border-[#bbb] whitespace-nowrap">
        <CandleIcon />
        <span className="ml-[1px] pt-[5px]">Gedetailleerd Rapport</span>
        <span className="ml-[5px] mt-[4px] pl-[6px] pt-[1px] border-l border-[#ccc]">ProBacktest</span>
        <span className="ml-[4px] mt-[4px] pl-[6px] pt-[1px] border-l border-[#ccc]">COG (Non-Repainting)</span>
        <span className="ml-[5px] mt-[4px] pl-[6px] pt-[1px] border-l border-[#ccc]">Wall Street Cash (1€)</span>
        <div className="ml-auto mr-[8px] flex items-center gap-[7px]">
          <div className="w-[15px] h-[5px] mt-[12px] bg-[#c8c8c8]" />
          <div className="w-[14px] h-[15px] border-[2px] border-[#c8c8c8]" />
          <svg width="14" height="16" viewBox="0 0 14 16" stroke="#c8c8c8" strokeWidth="3"><path d="M1 1l12 14M13 1L1 15" /></svg>
        </div>
      </div>
      <div className="h-[72px] shrink-0 flex items-center border-b border-[#c4c4c4]">
        <div className="w-[210px] h-full flex items-center pl-[15px] pt-[4px] font-bold text-[19px] border-r border-[#c4c4c4] whitespace-nowrap">Wall Street Cash (1€)</div>
        <div className="w-[215px] pt-[4px] flex flex-col items-center font-bold text-[19px] leading-[26px] whitespace-nowrap">
          <span>COG (Non-Repainting)</span>
          <span>76 minuten</span>
        </div>
        <button className="w-[182px] h-[36px] pt-[3px] bg-gradient-to-b from-[#f2f2f2] to-[#dcdcdc] border border-[#bcbcbc] rounded-[3px] text-[18px]">Wijzig ProBacktest</button>
        <div className="ml-[11px] h-full pl-[4px] pt-[4px] border-l border-[#c4c4c4] w-[363px] flex flex-col justify-center leading-[25px] whitespace-nowrap">
          <div className="flex items-center"><span className="w-[65px]">Start:</span><span>15-mei-2020 21:16:00</span><span className="ml-auto font-bold text-[19px]">[€1.000,00]</span></div>
          <div className="flex items-center"><span className="w-[70px]">Huidig :</span><span>30-jun-2020 11:08:00</span><span className="ml-auto font-bold text-[19px]">[€12.935,40]</span></div>
        </div>
        <svg width="32" height="36" viewBox="0 0 32 36" className="ml-[9px]">
          <path d="M9 2h13v14H9z" fill="#fff" stroke="#666" />
          <path d="M12 6h7M12 9h7M12 12h5" stroke="#777" />
          <rect x="2" y="15" width="28" height="16" rx="2" fill="#bbb" stroke="#444" />
          <rect x="4" y="23" width="24" height="6" fill="#eee" stroke="#777" />
          <path d="M20 28h10l-5 6z" fill="#111" />
        </svg>
      </div>
      <div className="mt-[14px] ml-[11px] flex gap-[2px] shrink-0 whitespace-nowrap">
        <div className="h-[29px] w-[98px] pt-[3px] flex items-center justify-center bg-[#4b7c2e] text-white rounded-t-[3px]">Overzicht</div>
        <div className={`${tab} w-[253px]`}>Statistieken gesloten posities</div>
        <div className={`${tab} w-[93px]`}>Orderlijst</div>
        <div className={`${tab} w-[192px]`}>Lijst gesloten posities</div>
      </div>
      <div className="ml-[11px] w-[1019px] h-[775px] shrink-0 border border-[#c0c0c0] flex flex-col bg-[#f6f6f6]">
        <div className="flex h-[749px]">
          <div className="w-[992px] shrink-0">
            <div className="flex h-[424px]">
              <OverviewLeft />
              <OverviewRight />
            </div>
            <div className="ml-[20px] h-px bg-[#c8c8c8]" />
            <DrawdownRow />
            <div className="ml-[20px] h-px bg-[#c8c8c8]" />
            <MarketRow />
          </div>
          <VScroll />
        </div>
        <HScroll />
      </div>
      <div className="mt-[11px] shrink-0 border-t border-[#bbb] pl-[6px] pt-[5px] leading-[20px] whitespace-nowrap bg-white flex-1">
        Deze statistieken hebben betrekking op gegevens uit het verleden. In het verleden behaalde resultaten bieden geen garantie
      </div>
    </div>
  );
}

function AxisColumn() {
  const labels: [number, string, boolean?][] = [
    [122, "12.800"], [153, "12.600"], [185, "12.400"], [217, "12.200"], [248, "12.000", true],
    [308, "1"], [331, "0", true],
    [381, "26.400"], [410, "26.300"], [442, "26.200"], [474, "26.100"], [505, "26.000", true],
    [537, "25.900"], [569, "25.800"], [601, "25.700"], [728, "25.300"], [759, "25.200"], [791, "25.100"],
    [822, "25.000", true], [854, "24.900"], [886, "24.800"], [918, "24.700"],
  ];
  return (
    <svg className="block bg-black" width="126" height="909" viewBox="1787 80 126 909">
      <rect x="1787" y="80" width="31.5" height="212.5" fill="#2a2a2a" stroke="#aaa" />
      <rect x="1787" y="295.5" width="31.5" height="69.5" fill="#262626" stroke="#aaa" />
      <line x1="1787" x2="1818" y1="331.5" y2="331.5" stroke="#2a2ac8" />
      <defs>
        <linearGradient id="hk" x1="0" x2="0" y1="0" y2="1">
          <stop offset="0" stopColor="#252525" />
          <stop offset="1" stopColor="#000" />
        </linearGradient>
      </defs>
      <rect x="1787" y="368.5" width="31.5" height="588.5" fill="url(#hk)" stroke="#aaa" />
      <text x="1827" y="100" fontSize="20" fontWeight="700" fill="#9c9c9c">13.000</text>
      {labels.map(([y, t, b]) => (
        <g key={t}>
          <line x1="1819" x2="1824" y1={y + 0.5} y2={y + 0.5} stroke="#aaa" />
          <text x={b && t !== "0" ? 1825 : 1827} y={y + 6} fontSize={b ? 20 : 17.5} fontWeight={b ? 700 : 400} fill="#9c9c9c">{t}</text>
        </g>
      ))}
      <rect x="1823.5" y="88.5" width="58" height="26" fill="#2b2b2b" stroke="#999" />
      <text x="1827" y="108" fontSize="17.5" fill="#ffa020">12.927</text>
      <rect x="1823.5" y="338.5" width="19" height="26" fill="#2b2b2b" stroke="#999" />
      <text x="1826" y="358" fontSize="17.5" fill="#ffa020">-1</text>
      <rect x="1823" y="628" width="89" height="28" fill="#f8c400" />
      <text x="1825" y="651" fontSize="19.5" fontWeight="700" fill="#000">25.535,2</text>
      <rect x="1823.5" y="656.5" width="88" height="28" fill="#2e2e2e" stroke="#999" />
      <text x="1825" y="679" fontSize="19.5" fontWeight="700" fill="#8a7a96">25.503,2</text>
      <rect x="1823" y="685" width="68" height="27" fill="#8ee88e" />
      <text x="1826" y="705" fontSize="17.5" fill="#000">27m57s</text>
    </svg>
  );
}

function ZoomBar() {
  return (
    <div className="h-[49px] bg-white border-b border-[#aaa] flex items-center pl-[4px]">
      <svg width="34" height="30" viewBox="0 0 34 30" className="overflow-visible">
        <circle cx="14" cy="13" r="10" fill="#d4d4d4" stroke="#222" strokeWidth="1.5" />
        <path d="M21 20l9 9" stroke="#111" strokeWidth="3.4" />
        <path d="M28 3v14M24 6l4-4 4 4M24 14l4 4 4-4M2 25h14M5 22l-4 3 4 3M13 22l4 3-4 3" stroke={BLUE} strokeWidth="1.6" fill="none" />
      </svg>
      <svg className="ml-[8px]" width="30" height="30" viewBox="0 0 30 30">
        <circle cx="12" cy="12" r="10" fill="#fff" stroke="#222" strokeWidth="2" />
        <path d="M20 20l9 9" stroke="#111" strokeWidth="3.4" />
        <path d="M7 12h10" stroke={BLUE} strokeWidth="3" />
      </svg>
      <svg className="ml-[12px]" width="30" height="30" viewBox="0 0 30 30">
        <circle cx="12" cy="12" r="10" fill="#fff" stroke="#222" strokeWidth="2" />
        <path d="M20 20l9 9" stroke="#111" strokeWidth="3.4" />
        <path d="M7 12h10M12 7v10" stroke={BLUE} strokeWidth="3" />
      </svg>
    </div>
  );
}

function EdgeStrip() {
  return (
    <div className="flex h-full">
      <div className="w-[4px] bg-[#dcdcdc]" />
      <div className="w-[7px] flex flex-col bg-black">
        <div className="h-[63px] bg-gradient-to-b from-black to-[#aaa]" />
        <div className="h-[30px] bg-white" />
        <div className="h-[12px]" />
        <div className="h-[30px] bg-gradient-to-b from-[#22c0e0] to-[#22d850]" />
        <div className="h-[70px]" />
        <div className="h-[20px] bg-white" />
        <div className="h-[552px]" />
        <div className="h-[14px] bg-white" />
        <div className="h-[128px]" />
        <div className="h-[40px] bg-white" />
      </div>
    </div>
  );
}

export default function App() {
  return (
    <div className="w-[1924px] h-[1038px] overflow-hidden flex flex-col bg-white font-['Liberation_Sans',Arial,sans-serif]">
      <TitleBar />
      <Toolbar />
      <div className="flex h-[958px]">
        <div className="w-[745px] shrink-0 bg-black flex flex-col">
          <EquityPanel />
          <BackTestPanel />
          <HeikinPanel />
          <TimeAxis />
          <BottomBar />
        </div>
        <div className="w-[1042px] shrink-0 pt-[2px] bg-[#2a2a2a]">
          <Report />
        </div>
        <div className="w-[126px] shrink-0 flex flex-col">
          <AxisColumn />
          <ZoomBar />
        </div>
        <EdgeStrip />
      </div>
    </div>
  );
}
